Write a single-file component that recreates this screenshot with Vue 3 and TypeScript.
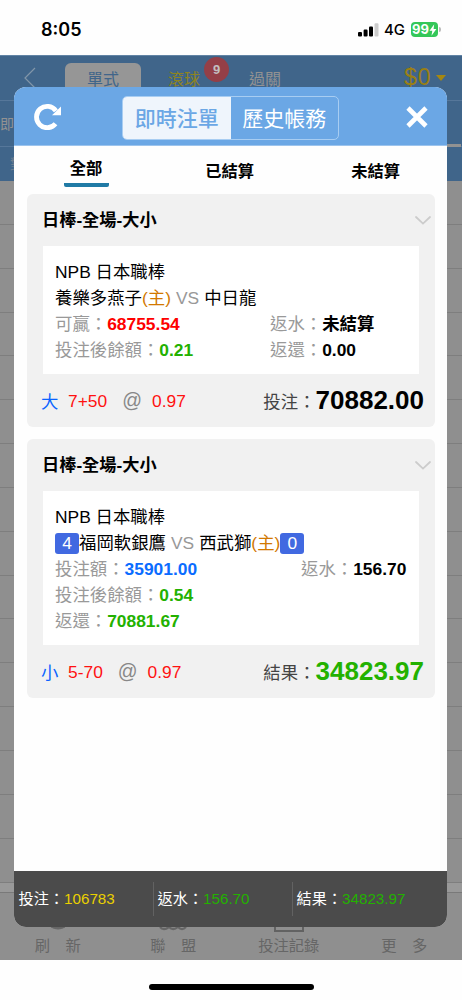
<script setup lang="ts">
import { ref } from 'vue'

interface Field { label: string; value: string; tone: string }
interface Row { left?: Field; right?: Field }
interface Bet {
  title: string
  league: string
  homeScore?: string
  awayScore?: string
  teamA: string
  teamB: string
  hostFirst: boolean
  rows: Row[]
  pick: string
  line: string
  odds: string
  totalLabel: string
  total: string
  totalTone: string
}

const tabs = ['全部', '已結算', '未結算']
const activeTab = ref(0)
const rowLines = Array.from({ length: 16 }, (_, i) => i)

const bets: Bet[] = [
  {
    title: '日棒-全場-大小', league: 'NPB 日本職棒', teamA: '養樂多燕子', teamB: '中日龍', hostFirst: true,
    rows: [
      { left: { label: '可贏', value: '68755.54', tone: 'red' }, right: { label: '返水', value: '未結算', tone: 'black' } },
      { left: { label: '投注後餘額', value: '0.21', tone: 'green' }, right: { label: '返還', value: '0.00', tone: 'black' } },
    ],
    pick: '大', line: '7+50', odds: '0.97', totalLabel: '投注', total: '70882.00', totalTone: 'black',
  },
  {
    title: '日棒-全場-大小', league: 'NPB 日本職棒', homeScore: '4', awayScore: '0', teamA: '福岡軟銀鷹', teamB: '西武獅', hostFirst: false,
    rows: [
      { left: { label: '投注額', value: '35901.00', tone: 'blue' }, right: { label: '返水', value: '156.70', tone: 'black' } },
      { left: { label: '投注後餘額', value: '0.54', tone: 'green' } },
      { left: { label: '返還', value: '70881.67', tone: 'green' } },
    ],
    pick: '小', line: '5-70', odds: '0.97', totalLabel: '結果', total: '34823.97', totalTone: 'green',
  },
]

const summary: Field[] = [
  { label: '投注', value: '106783', tone: 'yellow' },
  { label: '返水', value: '156.70', tone: 'green' },
  { label: '結果', value: '34823.97', tone: 'green' },
]
</script>

<template>
  <div class="screen">
    <header class="status">
      <span class="time">8:05</span>
      <svg class="signal" width="21" height="14" viewBox="0 0 21 14">
        <rect x="0" y="9" width="4" height="4.6" rx="1.1" />
        <rect x="5.6" y="6.6" width="4" height="7" rx="1.1" />
        <rect x="11" y="3.6" width="4" height="10" rx="1.1" />
        <rect x="16.5" y="0.3" width="4" height="13.3" rx="1.1" fill="#ccc" />
      </svg>
      <span class="net">4G</span>
      <span class="battery">99<svg width="8" height="12" viewBox="0 0 8 12"><path d="M5.2 0.3 0.5 6.8h2.8L2.5 11.7 7.4 5H4.6z" fill="#fff" /></svg></span>
      <span class="battery-cap"></span>
    </header>

    <main class="page">
      <div class="nav">
        <svg class="back" width="12" height="22" viewBox="0 0 12 22"><path d="M11 1 1 11l10 10" fill="none" stroke="#8296a9" stroke-width="1.2" /></svg>
        <span class="nav-tab">單式</span>
        <span class="nav-live">滾球</span>
        <span class="badge">9</span>
        <span class="nav-parlay">過關</span>
        <span class="money">$0</span>
        <span class="caret"></span>
      </div>
      <div class="subnav">即</div>
      <div class="subnav second">對<span class="marker"></span></div>
      <div class="lines"><div v-for="n in rowLines" :key="n" class="line"></div></div>
      <div class="strip"></div>
      <footer class="dock">
        <div class="dock-item"><svg width="14" height="6" viewBox="0 0 14 6"><path d="M0 0q7 4 14 0" fill="#666" stroke="#666" stroke-width="1" /></svg><span>刷　新</span></div>
        <div class="dock-item"><svg width="30" height="6" viewBox="0 0 30 6"><path d="M2 0q3.5 4 9 0q4 4 9 0q4 4 8 0" fill="none" stroke="#666" stroke-width="2.2" /></svg><span>聯　盟</span></div>
        <div class="dock-item"><svg width="30" height="6" viewBox="0 0 30 6"><path d="M1 0v4h28V0" fill="none" stroke="#626262" stroke-width="2" /></svg><span>投注記錄</span></div>
        <div class="dock-item"><svg width="30" height="6" /><span>更　多</span></div>
      </footer>
    </main>
    <div class="home"><span></span></div>

    <section class="modal">
      <div class="head">
        <svg class="reload" width="28" height="27" viewBox="0 0 28 27">
          <path d="M21.5 20.8A10.7 10.7 0 1 1 21.9 7.8" fill="none" stroke="#fff" stroke-width="4.8" />
          <path d="M27 3.6v8.6H18z" fill="#fff" />
        </svg>
        <div class="switch"><button class="on">即時注單</button><button>歷史帳務</button></div>
        <svg class="close" width="22" height="22" viewBox="0 0 22 22"><path d="M2 2l18 18M20 2 2 20" stroke="#fff" stroke-width="4.6" /></svg>
      </div>
      <nav class="tabs">
        <button v-for="(tab, i) in tabs" :key="tab" :class="{ active: i === activeTab }" @click="activeTab = i">{{ tab }}</button>
      </nav>
      <div class="list">
        <article v-for="(bet, i) in bets" :key="i" class="card">
          <header class="card-head">
            <b>{{ bet.title }}</b>
            <svg width="16" height="9" viewBox="0 0 16 9"><path d="M1 1l7 6.6L15 1" fill="none" stroke="#ccc" stroke-width="1.8" stroke-linecap="round" /></svg>
          </header>
          <div class="detail">
            <div class="row">{{ bet.league }}</div>
            <div class="row teams">
              <span v-if="bet.homeScore" class="score">{{ bet.homeScore }}</span><span>{{ bet.teamA }}</span><span v-if="bet.hostFirst" class="host">(主)</span><span class="vs">VS</span><span>{{ bet.teamB }}</span><span v-if="!bet.hostFirst" class="host">(主)</span><span v-if="bet.awayScore" class="score">{{ bet.awayScore }}</span>
            </div>
            <div v-for="(row, r) in bet.rows" :key="r" class="row pair">
              <span v-if="row.left" class="field">{{ row.left.label }}：<b :class="row.left.tone">{{ row.left.value }}</b></span>
              <span v-if="row.right" class="field right" :class="{ settled: !bet.hostFirst }">{{ row.right.label }}：<b :class="row.right.tone">{{ row.right.value }}</b></span>
            </div>
          </div>
          <footer class="card-foot">
            <span class="pick">{{ bet.pick }}</span><span class="bet-line">{{ bet.line }}</span><span class="at">@</span><span class="odds">{{ bet.odds }}</span>
            <span class="total">{{ bet.totalLabel }}：<b :class="bet.totalTone">{{ bet.total }}</b></span>
          </footer>
        </article>
      </div>
      <footer class="summary">
        <div v-for="s in summary" :key="s.label">{{ s.label }}：<span :class="s.tone">{{ s.value }}</span></div>
      </footer>
    </section>
  </div>
</template>

<style>
html, body { margin: 0; background: #fff; }
</style>

<style scoped>
* { box-sizing: border-box; }
.screen { position: relative; width: 462px; height: 1000px; overflow: hidden; background: #fefefe; font-family: "Liberation Sans", "Noto Sans CJK TC", sans-serif; color: #000; display: flex; flex-direction: column; white-space: nowrap; }
button { font: inherit; border: 0; background: none; padding: 0; margin: 0; color: inherit; }
.status { height: 55px; display: flex; align-items: center; padding: 4px 20px 0 41px; flex: none; }
.time { font: 600 18px Inter, sans-serif; width: 317px; }
.signal { flex: none; margin-top: 1px; }
.net { font: 500 15px Inter, sans-serif; width: 21px; margin-left: 5px; margin-right: 5px; }
.battery { width: 27px; height: 15.5px; border-radius: 4px; background: #34c759; color: #fff; font: 700 13px/15.5px Inter, sans-serif; display: flex; align-items: center; justify-content: center; flex: none; margin-left: 1px; }
.battery-cap { width: 1.5px; height: 5px; background: #bbb; margin-left: 1px; border-radius: 0 2px 2px 0; }

.page { height: 905px; flex: none; background: #8f8f8f; display: flex; flex-direction: column; overflow: hidden; }
.nav { height: 46px; background: #40658a; flex: none; display: flex; align-items: flex-start; color: #929292; font-size: 16px; border-top: 1px solid #6284a5; border-bottom: 1px solid #56779a; }
.back { margin: 11px 0 0 24px; flex: none; }
.nav-tab { width: 76px; height: 40px; margin: 7px 0 0 29px; background: #969696; border-radius: 6px 6px 0 0; color: #40658a; text-align: center; line-height: 34px; flex: none; }
.nav-live { margin: 7px 0 0 27px; color: #8e8420; line-height: 34px; width: 35px; flex: none; }
.badge { width: 25px; height: 25px; margin: 1px 0 0 1px; border-radius: 50%; background: #943f47; color: #c3c0c0; font: bold 13px/25px "Liberation Sans", sans-serif; text-align: center; flex: none; }
.nav-parlay { margin: 7px 0 0 20px; line-height: 34px; width: 155px; flex: none; }
.money { font-size: 23px; line-height: 43px; color: #9a7f13; width: 28px; letter-spacing: 1px; flex: none; }
.caret { border: 5px solid transparent; border-top: 6px solid #a58710; border-bottom: 0; margin: 19px 0 0 4px; }
.subnav { height: 46px; background: #40658a; border-bottom: 1px solid #56779a; color: #929292; font-size: 14px; line-height: 47px; flex: none; }
.second { height: 34px; line-height: 34px; padding-left: 10px; border: 0; display: flex; justify-content: space-between; color: #6f7f90; }
.marker { width: 14px; height: 3px; background: #929292; margin-right: 1px; margin-top: -3px; }
.lines { height: 702px; flex: none; overflow: hidden; }
.line { height: 43.85px; border-bottom: 1px solid #7e7e7e; }
.strip { height: 10px; background: #999; border-bottom: 1px solid #797979; flex: none; }
.dock { flex: 1; display: grid; grid-template-columns: repeat(4, 1fr); padding-top: 34px; color: #666; font-size: 15.3px; }
.dock-item { display: flex; flex-direction: column; align-items: center; line-height: 25px; }
.dock-item svg { display: block; flex: none; }
.home { display: flex; justify-content: center; padding-top: 24px; }
.home span { width: 165px; height: 6px; border-radius: 3px; background: #000; }

.modal { position: absolute; left: 14px; top: 87px; width: 433px; height: 840px; background: #fefefe; border-radius: 12px; overflow: hidden; display: flex; flex-direction: column; }
.head { height: 59px; background: #6ba7e5; display: flex; align-items: center; border-bottom: 1px solid #9dc4ed; flex: none; }
.reload { margin-left: 20px; flex: none; }
.switch { width: 217px; height: 44px; margin: 3px 0 0 60px; border: 1px solid #a8cdf2; border-radius: 5px; display: flex; color: #fff; font-size: 21px; flex: none; overflow: hidden; }
.switch button { flex: 1; line-height: 44px; }
.switch .on { background: #eff5fc; color: #6ba7e5; font-weight: 500; }
.close { margin-left: 67px; margin-top: 2px; }
.tabs { height: 48px; display: flex; justify-content: space-between; padding: 0 47px 0 50px; font-size: 16.3px; font-weight: bold; flex: none; }
.tabs button { height: 41px; line-height: 50px; }
.tabs button:nth-child(2) { margin-right: 1px; }
.tabs .active { width: 45px; line-height: 45px; text-indent: -1px; border-bottom: 4px solid #207aa5; border-radius: 0 0 2px 2px; }
.list { flex: 1; display: flex; flex-direction: column; gap: 12px; padding: 0 12px 0 13px; }
.card { background: #f1f1f1; border-radius: 6px; flex: none; }
.card-head { height: 52px; padding: 0 4px 0 15px; display: flex; align-items: center; justify-content: space-between; font-size: 17.2px; }
.card-head b { margin-top: -3px; }
.detail { margin: 0 16px; background: #fff; padding: 13px 12px 11px; font-size: 17.4px; }
.row { height: 26px; line-height: 26px; display: flex; align-items: center; }
.pair { color: #999; }
.field.right { margin-left: auto; width: 137px; }
.field.right.settled { width: 106px; }
.host { color: #d27800; }
.vs { color: #999; margin: 0 5px; }
.score { width: 24px; height: 21px; line-height: 21px; border-radius: 3px; background: #4169e1; color: #fff; text-align: center; }
.card-foot { height: 53px; display: flex; align-items: center; padding: 0 11px 0 14px; font-size: 17.4px; color: #f11; }
.pick { color: #0a63ff; width: 27px; }
.bet-line, .odds { padding-top: 2px; }
.at { color: #888; font-size: 19.5px; margin: 0 10px 0 15px; }
.total { margin-left: auto; color: #444; display: flex; align-items: center; }
.total b { font-size: 26px; margin-top: -1px; }
.red { color: #fe0000; }
.green { color: #23b100; }
.blue { color: #0a6cff; }
.black { color: #000; }
.yellow { color: #ead000; }
.summary { height: 56px; background: #4b4b4b; display: grid; grid-template-columns: 139px 139px 155px; align-items: center; color: #fff; font-size: 15.2px; flex: none; }
.summary div { height: 34px; line-height: 34px; padding-left: 3.5px; border-left: 1px solid #626262; }
.summary div:first-child { border-color: transparent; }
</style>
